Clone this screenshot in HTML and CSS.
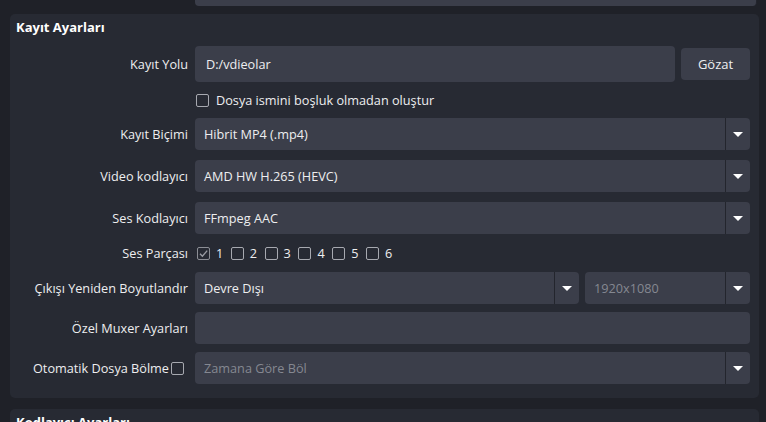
FILE: index.html
```html
<!DOCTYPE html>
<html lang="tr">
<head>
    <meta charset="UTF-8">
    <meta name="viewport" content="width=device-width, initial-scale=1.0">
    <title>Kayıt Ayarları</title>
    <link rel="stylesheet" href="styles.css">
</head>
<body>

<div class="settings">
    <div class="top-field"></div>

    <section class="group">
        <h2 class="group-title">Kayıt Ayarları</h2>
        <div class="form">
            <div class="row">
                <label class="label">Kayıt Yolu</label>
                <div class="path">
                    <div class="field text-field">D:/vdieolar</div>
                    <button class="browse">Gözat</button>
                </div>
            </div>

            <div class="row row-check">
                <span></span>
                <label class="check-line"><span class="box"></span>Dosya ismini boşluk olmadan oluştur</label>
            </div>

            <div class="row">
                <label class="label">Kayıt Biçimi</label>
                <div class="field combo"><span class="value">Hibrit MP4 (.mp4)</span><span class="arrow"></span></div>
            </div>

            <div class="row">
                <label class="label">Video kodlayıcı</label>
                <div class="field combo"><span class="value">AMD HW H.265 (HEVC)</span><span class="arrow"></span></div>
            </div>

            <div class="row">
                <label class="label">Ses Kodlayıcı</label>
                <div class="field combo"><span class="value">FFmpeg AAC</span><span class="arrow"></span></div>
            </div>

            <div class="row row-tracks">
                <label class="label">Ses Parçası</label>
                <div class="tracks">
                    <label class="track"><span class="box checked"><svg viewBox="0 0 13 13" width="13" height="13"><path d="M3 6.8 L5.4 9.2 L10.2 3.6" fill="none" stroke="#9a9ca3" stroke-width="1.4"/></svg></span>1</label>
                    <label class="track"><span class="box"></span>2</label>
                    <label class="track"><span class="box"></span>3</label>
                    <label class="track"><span class="box"></span>4</label>
                    <label class="track"><span class="box"></span>5</label>
                    <label class="track"><span class="box"></span>6</label>
                </div>
            </div>

            <div class="row">
                <label class="label">Çıkışı Yeniden Boyutlandır</label>
                <div class="split">
                    <div class="field combo"><span class="value">Devre Dışı</span><span class="arrow"></span></div>
                    <div class="field combo disabled"><span class="value">1920x1080</span><span class="arrow"></span></div>
                </div>
            </div>

            <div class="row row-tight">
                <label class="label">Özel Muxer Ayarları</label>
                <div class="field text-field"></div>
            </div>

            <div class="row row-tight">
                <label class="label label-check">Otomatik Dosya Bölme<span class="box"></span></label>
                <div class="field combo disabled"><span class="value">Zamana Göre Böl</span><span class="arrow"></span></div>
            </div>
        </div>
    </section>

    <section class="group">
        <h2 class="group-title">Kodlayıcı Ayarları</h2>
    </section>
</div>

</body>
</html>
```

FILE: styles.css
```css
html, body {
    margin: 0;
    height: 100%;
    overflow: hidden;
}
body {
    font-family: "Open Sans", "Noto Sans", sans-serif;
    font-size: 12.7px;
    color: #eeeef0;
    background-color: #1f2128;
}
.settings {
    padding: 0 7px 0 10px;
}
.top-field {
    height: 6px;
    width: 561px;
    margin-left: 185px;
    background-color: #3b3e4a;
    border-radius: 0 0 4px 4px;
    border-right: 1px solid #23252d;
}
.group {
    margin-top: 8px;
    padding: 4px 9px 14px 0;
    background-color: #272a33;
    border-radius: 5px;
}
.group + .group {
    margin-top: 11px;
}
.group-title {
    margin: 0;
    padding-left: 6px;
    font-size: 13px;
    font-weight: 700;
    line-height: 18px;
    color: #ffffff;
}
.form {
    display: flex;
    flex-direction: column;
    gap: 10px;
    margin-top: 10px;
}
.row {
    display: grid;
    grid-template-columns: 178px 1fr;
    column-gap: 7px;
    align-items: center;
}
.row-tight {
    margin-top: -2px;
}
.row-check {
    height: 16px;
    margin-top: -1px;
    margin-bottom: 1px;
}
.row-tracks {
    height: 18px;
}
.label {
    text-align: right;
    white-space: nowrap;
}
.label-check {
    display: flex;
    justify-content: flex-end;
    align-items: center;
    gap: 2px;
    padding-right: 4px;
}
.field {
    display: flex;
    align-items: center;
    height: 32px;
    background-color: #3b3e4a;
    border-radius: 4px;
    box-sizing: border-box;
}
.text-field {
    padding-left: 11px;
}
.path {
    display: flex;
    align-items: center;
    gap: 6px;
}
.path .field {
    flex: 1;
    height: 36px;
}
.browse {
    width: 69px;
    height: 32px;
    border: none;
    border-radius: 4px;
    background-color: #3b3e4a;
    color: #eeeef0;
    font-family: inherit;
    font-size: 13px;
    padding: 0;
}
.combo {
    padding-left: 9px;
}
.combo .value {
    flex: 1;
    white-space: nowrap;
}
.combo .arrow {
    position: relative;
    width: 24px;
    height: 100%;
    border-left: 1px solid #23252d;
}
.combo .arrow::after {
    content: "";
    position: absolute;
    left: 7px;
    top: 14px;
    border-left: 5px solid transparent;
    border-right: 5px solid transparent;
    border-top: 5px solid #ffffff;
}
.disabled .value {
    color: #858891;
}
.split {
    display: grid;
    grid-template-columns: 384px 1fr;
    gap: 6px;
}
.box {
    display: inline-block;
    width: 13px;
    height: 13px;
    box-sizing: border-box;
    border: 1px solid #a7a9b0;
    border-radius: 2px;
    flex: none;
}
.box.checked {
    border-color: #8c8e95;
}
.box svg {
    display: block;
    margin: -1px;
}
.check-line {
    display: flex;
    align-items: center;
    gap: 7px;
    padding-left: 1px;
    white-space: nowrap;
}
.tracks {
    display: flex;
    align-items: center;
    padding-left: 2px;
}
.track {
    display: flex;
    align-items: center;
    gap: 6px;
    width: 33.8px;
}
```
